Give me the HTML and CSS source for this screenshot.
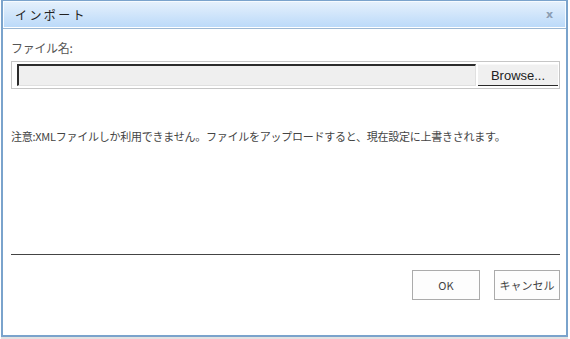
FILE: index.html
```html
<!DOCTYPE html>
<html lang="ja">
<head>
<meta charset="utf-8">
<link rel="stylesheet" href="styles.css">
</head>
<body>
<div class="dialog">
  <div class="titlebar">
    <span class="title">インポート</span>
    <span class="close">x</span>
  </div>
  <div class="content">
    <div class="label">ファイル名:</div>
    <div class="filebox">
      <div class="field"></div>
      <div class="browse">Browse...</div>
    </div>
    <p class="note">注意:XMLファイルしか利用できません。ファイルをアップロードすると、現在設定に上書きされます。</p>
    <div class="rule"></div>
    <div class="actions">
      <button class="btn btn-ok">OK</button>
      <button class="btn btn-cancel">キャンセル</button>
    </div>
  </div>
</div>
</body>
</html>
```

FILE: styles.css
```css
html, body {
  margin: 0;
  padding: 0;
  background: #ffffff;
}
body {
  width: 570px;
  height: 339px;
  overflow: hidden;
  font-family: "Noto Sans CJK JP", "Noto Sans", sans-serif;
  color: #444;
}
.dialog {
  box-sizing: border-box;
  margin-left: 1px;
  width: 567px;
  height: 337px;
  border: 2px solid #7aa3cc;
  border-top: 1px solid #7aa3cc;
  box-shadow: 0 2px 0 #e2e2e2;
  background: #fff;
  display: flex;
  flex-direction: column;
}
.titlebar {
  height: 27px;
  box-sizing: border-box;
  border: 1px solid #f6fbff;
  border-bottom: 1px solid #ffffff;
  background: linear-gradient(#e4f0fc, #bcdaf9);
  display: flex;
  align-items: center;
  justify-content: space-between;
  padding: 0 12px 0 11px;
  box-shadow: 0 1px 0 #9bb7d3;
}
.title {
  font-size: 12px;
  color: #222;
  letter-spacing: 2.4px;
}
.close {
  font-family: "DejaVu Sans", sans-serif;
  font-weight: bold;
  font-size: 11px;
  color: #8b9db2;
}
.content {
  padding: 9px 6px 0 8px;
  display: flex;
  flex-direction: column;
}
.label {
  font-size: 12px;
  color: #555;
  line-height: 16px;
  margin-top: 3px;
  letter-spacing: -0.3px;
}
.filebox {
  margin-top: 5px;
  height: 28px;
  box-sizing: border-box;
  border: 1px solid #c6c6c6;
  display: flex;
  align-items: stretch;
  padding: 2px 1px 2px 5px;
  gap: 2px;
}
.field {
  flex: 1;
  border-top: 2px solid #2c2c2c;
  border-left: 2px solid #2c2c2c;
  border-right: 1px solid #e0e0e0;
  border-bottom: 1px solid #e0e0e0;
  background: #efefef;
}
.browse {
  width: 80px;
  box-sizing: border-box;
  background: #f0f0f0;
  border-bottom: 1px solid #2a2a2a;
  border-top: 1px solid #f8f8f8;
  font-family: "Liberation Sans", sans-serif;
  font-size: 13px;
  color: #222;
  display: flex;
  align-items: center;
  justify-content: center;
}
.note {
  margin: 39px 0 0 0;
  font-size: 11px;
  line-height: 16px;
  color: #444;
  letter-spacing: -0.25px;
}
.rule {
  margin-top: 110px;
  height: 1px;
  background: #444;
}
.actions {
  display: flex;
  justify-content: flex-end;
  gap: 14px;
  margin-top: 15px;
}
.btn {
  height: 30px;
  background: #fdfdfd;
  border: 1px solid #ababab;
  font-family: "Noto Sans CJK JP", sans-serif;
  font-size: 11px;
  color: #444;
  padding: 0;
}
.btn-ok {
  width: 68px;
}
.btn-cancel {
  width: 66px;
}
```
